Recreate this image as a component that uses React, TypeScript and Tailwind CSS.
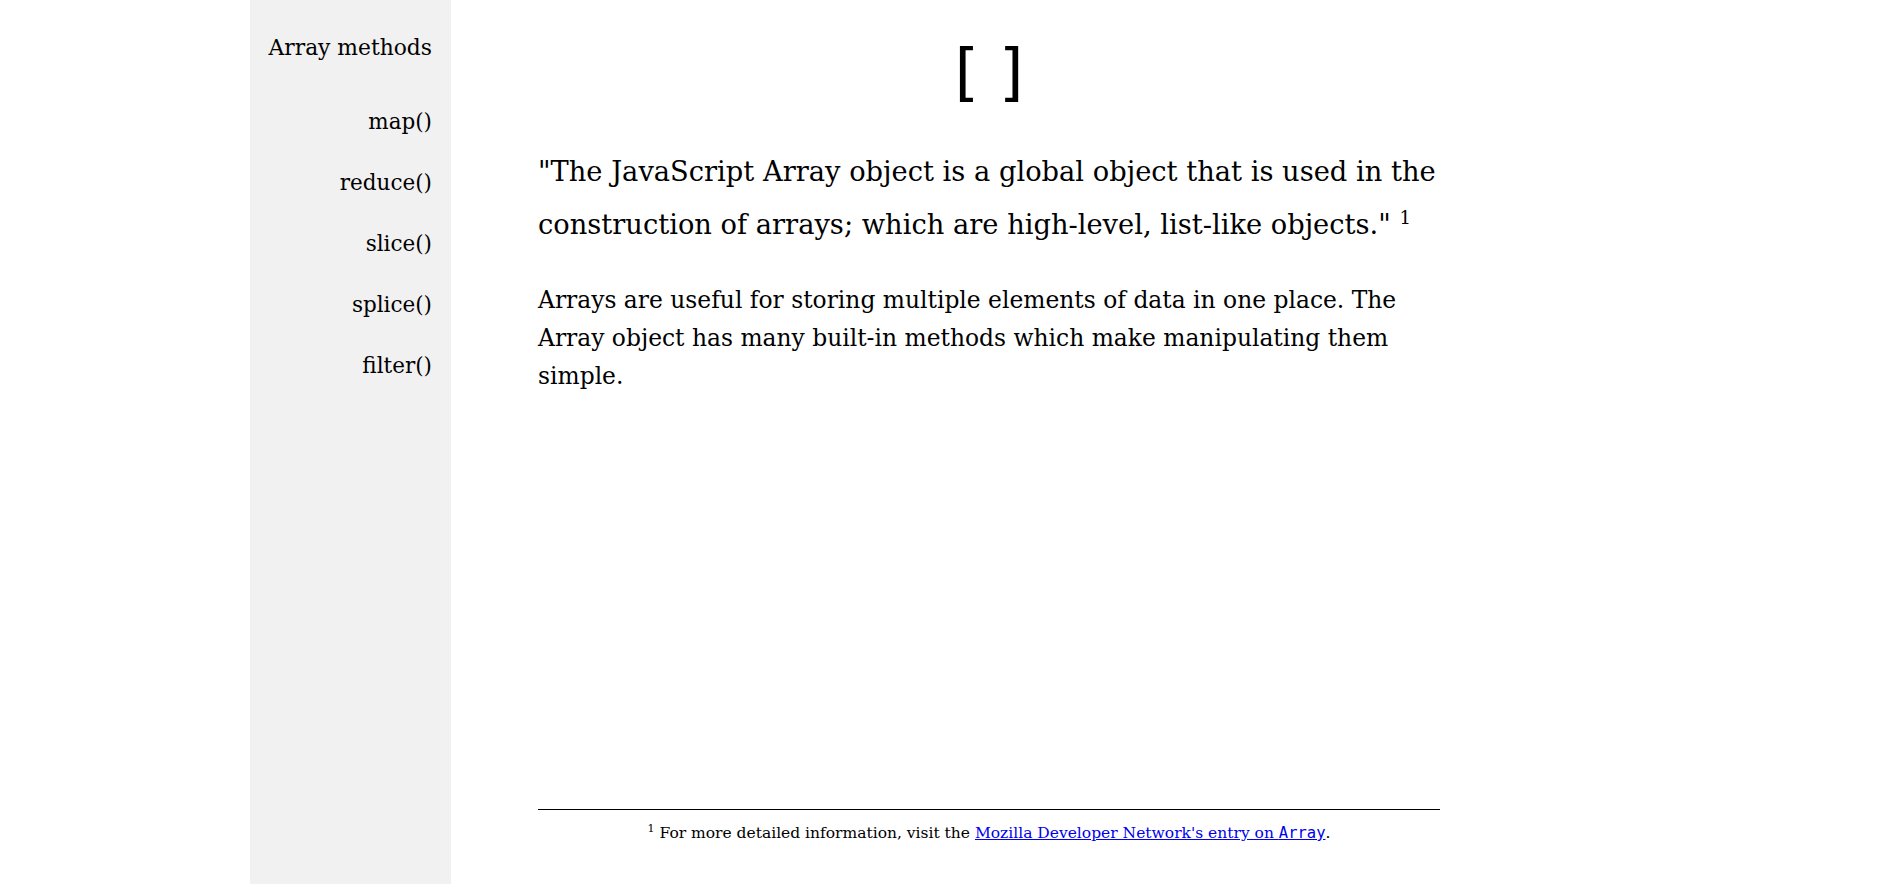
import React from "react";

const serif = { fontFamily: '"DejaVu Serif", "Liberation Serif", serif' };

export default function App() {
  const items = ["map()", "reduce()", "slice()", "splice()", "filter()"];
  return (
    <div className="min-h-[884px] w-full bg-white text-black" style={serif}>
      <div className="flex min-h-[884px] pl-[250px]">
        <aside className="w-[201px] shrink-0 bg-[#f1f1f1] pr-[19px] text-right">
          <div className="pt-[33px] text-[21.8px] leading-[30px]">Array methods</div>
          <ul className="mt-[44px] flex flex-col gap-[31px] text-[21.5px] leading-[30px]">
            {items.map((m) => (
              <li key={m}>{m}</li>
            ))}
          </ul>
        </aside>
        <main className="flex w-[989px] flex-col pl-[87px]">
          <div className="w-[902px]">
            <h1 className="pt-[30px] text-center text-[63px] leading-[84px]" style={{ fontFamily: '"DejaVu Sans", sans-serif' }}>
              [ ]
            </h1>
            <p className="mt-[31px] text-[27.3px] leading-[53px]">
              "The JavaScript Array object is a global object that is used in the construction of arrays; which are high-level, list-like objects."{" "}
              <span className="relative -top-[10px] text-[18px] leading-none">1</span>
            </p>
            <p className="mt-[30px] text-[23.4px] leading-[38px]">
              Arrays are useful for storing multiple elements of data in one place. The Array object has many built-in methods which make manipulating them simple.
            </p>
          </div>
          <footer className="mt-auto mb-[40px] w-[902px] border-t border-black pt-[12px] text-center text-[15.5px] leading-[22px]">
            <span className="relative -top-[6px] text-[11px] leading-none">1</span> For more detailed information, visit the{" "}
            <a href="#" className="text-[#0000ee] underline">
              Mozilla Developer Network's entry on <code style={{ fontFamily: '"DejaVu Sans Mono", monospace' }}>Array</code>
            </a>
            .
          </footer>
        </main>
      </div>
    </div>
  );
}
